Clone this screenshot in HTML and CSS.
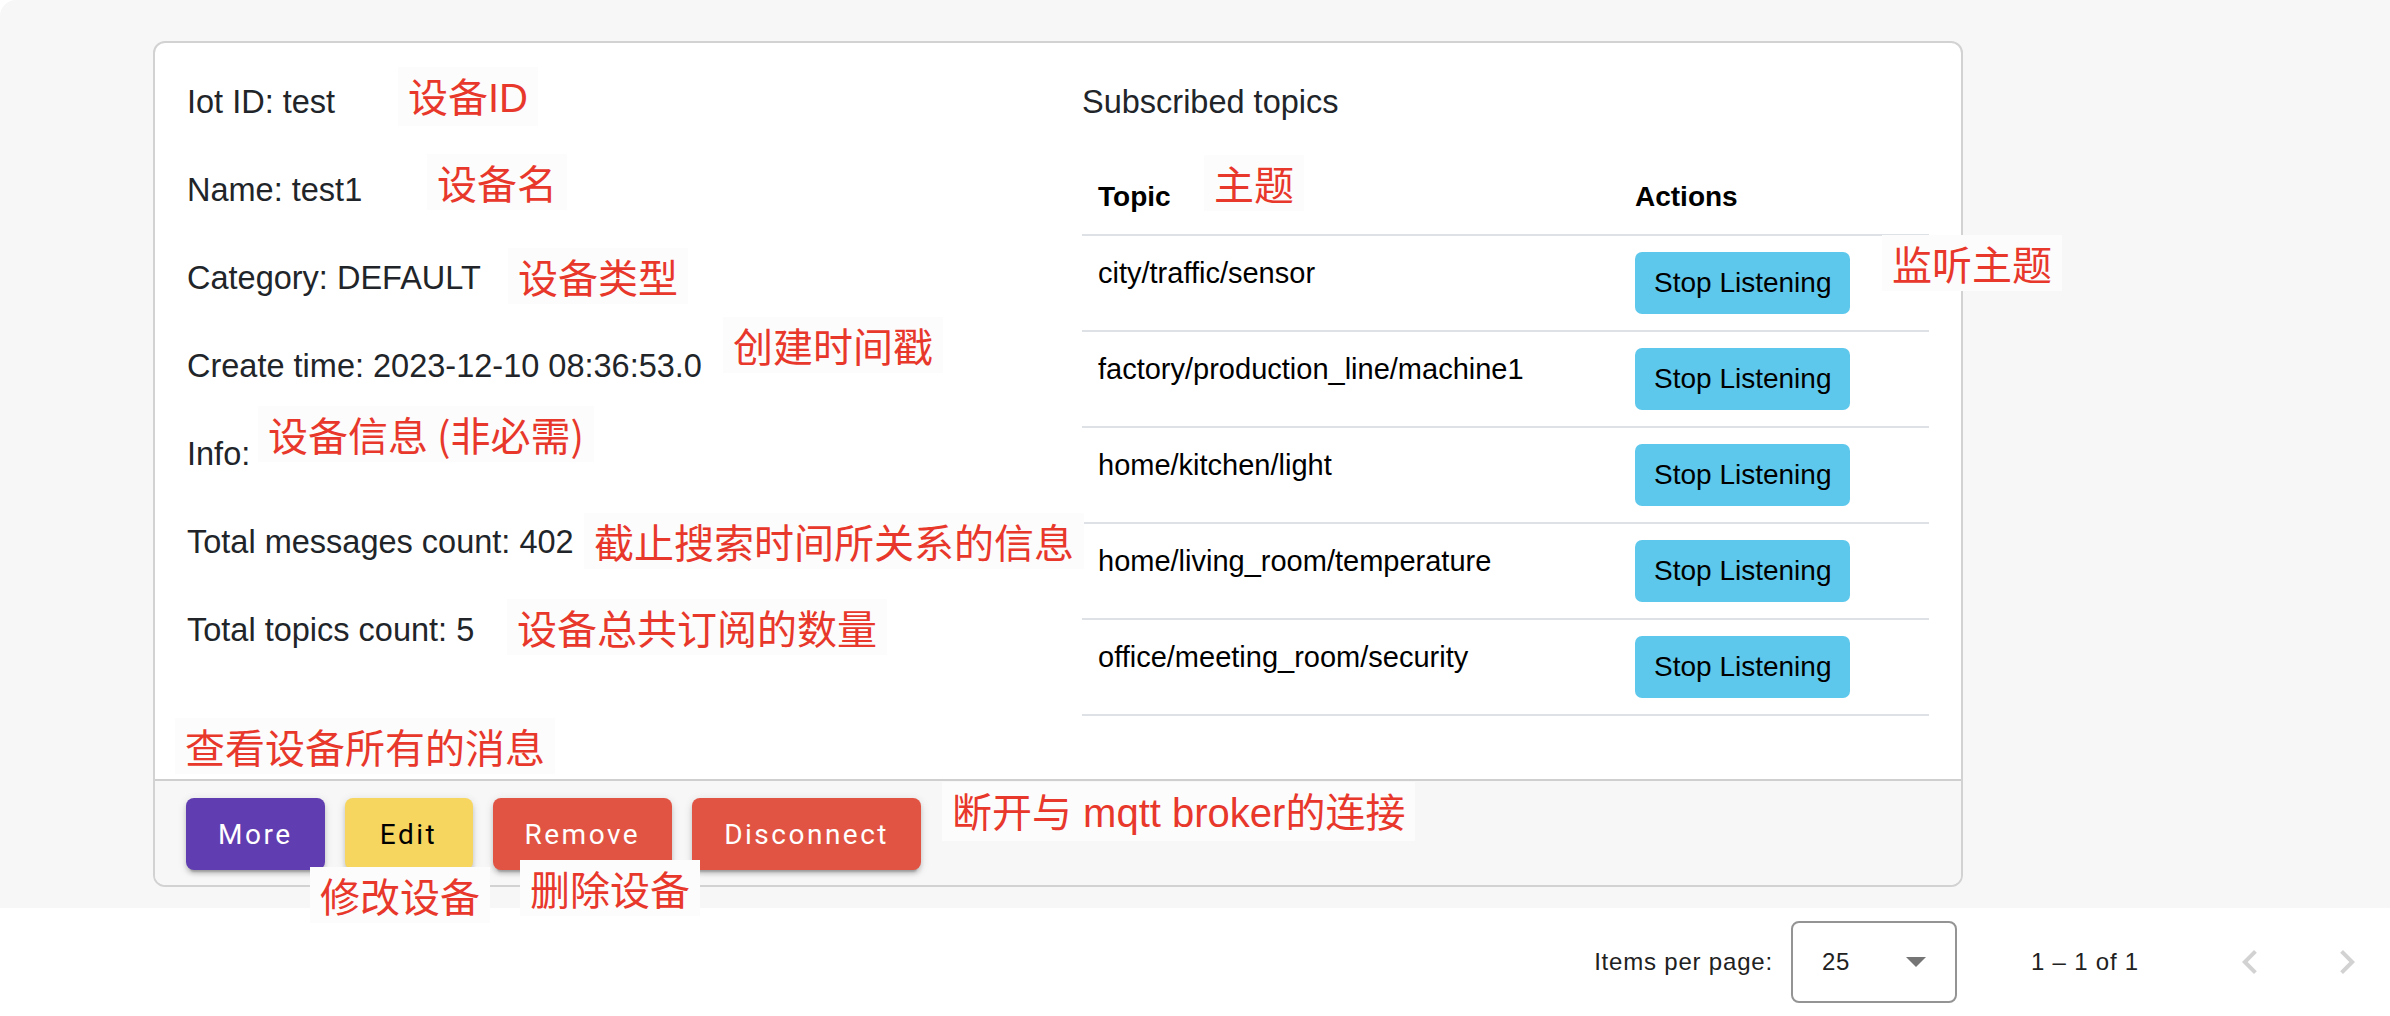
FILE: index.html
```html
<!DOCTYPE html>
<html lang="en">
<head>
<meta charset="utf-8">
<title>Device</title>
<link rel="stylesheet" href="styles.css">
</head>
<body>
<div class="shell">
  <div class="card">
    <div class="card-body">
      <div class="info-col">
        <p>Iot ID: test</p>
        <p>Name: test1</p>
        <p>Category: DEFAULT</p>
        <p>Create time: 2023-12-10 08:36:53.0</p>
        <p>Info:</p>
        <p>Total messages count: 402</p>
        <p>Total topics count: 5</p>
      </div>
      <div class="topics-col">
        <p class="topics-title">Subscribed topics</p>
        <table class="topics">
          <thead>
            <tr><th class="col-topic">Topic</th><th>Actions</th></tr>
          </thead>
          <tbody>
            <tr><td>city/traffic/sensor</td><td><button class="btn-info">Stop Listening</button></td></tr>
            <tr><td>factory/production_line/machine1</td><td><button class="btn-info">Stop Listening</button></td></tr>
            <tr><td>home/kitchen/light</td><td><button class="btn-info">Stop Listening</button></td></tr>
            <tr><td>home/living_room/temperature</td><td><button class="btn-info">Stop Listening</button></td></tr>
            <tr><td>office/meeting_room/security</td><td><button class="btn-info">Stop Listening</button></td></tr>
          </tbody>
        </table>
      </div>
    </div>
    <div class="card-footer">
      <button class="mbtn purple">More</button>
      <button class="mbtn yellow">Edit</button>
      <button class="mbtn red">Remove</button>
      <button class="mbtn red">Disconnect</button>
    </div>
  </div>
</div>
<div class="paginator">
  <span class="pg-label">Items per page:</span>
  <div class="pg-select"><span>25</span><span class="pg-arrow"></span></div>
  <span class="pg-range">1 – 1 of 1</span>
  <button class="pg-nav" aria-label="Previous page"><svg viewBox="0 0 24 24" width="48" height="48"><path d="M15.41 7.41L14 6l-6 6 6 6 1.41-1.41L10.83 12z" fill="currentColor"/></svg></button>
  <button class="pg-nav" aria-label="Next page"><svg viewBox="0 0 24 24" width="48" height="48"><path d="M8.59 16.59L10 18l6-6-6-6-1.41 1.41L13.17 12z" fill="currentColor"/></svg></button>
</div>

<span class="note a1">设备<span class="lat">ID</span></span>
<span class="note a2">设备名</span>
<span class="note a3">设备类型</span>
<span class="note a4">创建时间戳</span>
<span class="note a5">设备信息 (非必需)</span>
<span class="note a6">截止搜索时间所关系的信息</span>
<span class="note a7">设备总共订阅的数量</span>
<span class="note a8">查看设备所有的消息</span>
<span class="note a9">修改设备</span>
<span class="note a10">删除设备</span>
<span class="note a11">断开与<span class="lat"> mqtt broker</span>的连接</span>
<span class="note a12">主题</span>
<span class="note a13">监听主题</span>
</body>
</html>
```

FILE: styles.css
```css
html, body {
  margin: 0;
  padding: 0;
  background: #ffffff;
}
body {
  position: relative;
  width: 2390px;
  height: 1016px;
  overflow: hidden;
  font-family: "Liberation Sans", Arial, sans-serif;
  color: #212529;
}
.shell {
  background: #f7f7f7;
  border-top-left-radius: 16px;
  padding: 41px 0 21px 153px;
}
.card {
  width: 1810px;
  box-sizing: border-box;
  background: #ffffff;
  border: 2px solid #d2d2d2;
  border-radius: 12px;
  overflow: hidden;
}
.card-body {
  display: grid;
  grid-template-columns: 1fr 847px;
  column-gap: 48px;
  padding: 31px 32px 31px 32px;
}
.info-col p {
  margin: 0 0 32px 0;
  font-size: 32.5px;
  line-height: 56px;
}
.topics-title {
  margin: 0 0 31px 0;
  font-size: 32.5px;
  line-height: 56px;
}
.topics {
  width: 847px;
  border-collapse: collapse;
  margin-bottom: 32px;
  color: #000;
}
.topics th {
  text-align: left;
  font-weight: bold;
  font-size: 28px;
  line-height: 42px;
  padding: 15px 16px 16px 16px;
  border-bottom: 2px solid #dee2e6;
}
.topics th.col-topic {
  width: 505px;
}
.topics td {
  vertical-align: top;
  font-size: 29px;
  line-height: 42px;
  padding: 16px 16px;
  border-bottom: 2px solid #dee2e6;
}
.btn-info {
  display: block;
  height: 62px;
  box-sizing: border-box;
  padding: 0 19px;
  border: none;
  border-radius: 7px;
  background: #5dc8ec;
  color: #000;
  font-family: "Liberation Sans", Arial, sans-serif;
  font-size: 28px;
  line-height: 62px;
}
.card-footer {
  display: flex;
  gap: 20px;
  background: #f7f7f7;
  border-top: 2px solid #cfcfcf;
  padding: 17px 31px 15px 31px;
}
.mbtn {
  min-width: 128px;
  height: 72px;
  padding: 0 32px;
  border: none;
  border-radius: 8px;
  font-family: Roboto, "Liberation Sans", sans-serif;
  font-size: 28px;
  font-weight: 400;
  letter-spacing: 2.5px;
  box-shadow: 0 6px 2px -4px rgba(0,0,0,.2), 0 4px 4px 0 rgba(0,0,0,.14), 0 2px 10px 0 rgba(0,0,0,.12);
}
.purple { background: #603db0; color: #fff; }
.yellow { background: #f7d660; color: #000; }
.red { background: #e15443; color: #fff; }

.paginator {
  height: 108px;
  display: flex;
  align-items: center;
  justify-content: flex-end;
  padding-right: 15px;
  font-family: "Liberation Sans", Arial, sans-serif;
  font-size: 24px;
  letter-spacing: 0.8px;
  color: #212121;
}
.pg-label {
  margin-right: 18px;
}
.pg-select {
  width: 166px;
  height: 82px;
  box-sizing: border-box;
  border: 2px solid #949494;
  border-radius: 8px;
  display: flex;
  align-items: center;
  justify-content: space-between;
  padding: 0 29px 0 29px;
}
.pg-arrow {
  width: 0;
  height: 0;
  border-left: 10px solid transparent;
  border-right: 10px solid transparent;
  border-top: 10px solid #757575;
}
.pg-range {
  margin-left: 74px;
  margin-right: 83px;
}
.pg-nav {
  width: 56px;
  height: 80px;
  padding: 0;
  border: none;
  background: transparent;
  color: #d2d2d2;
  display: flex;
  align-items: center;
  justify-content: center;
}
.pg-nav + .pg-nav {
  margin-left: 41px;
}

.note {
  position: absolute;
  font-family: "Noto Sans CJK SC", "Noto Sans", sans-serif;
  font-size: 40px;
  line-height: 44px;
  color: #e8372b;
  background: #fcfcfc;
  padding: 6px 10px;
  white-space: nowrap;
}
.note .lat {
  font-family: "Liberation Sans", Arial, sans-serif;
}
.a1 { left: 398px; top: 67px; }
.a2 { left: 427px; top: 154px; }
.a3 { left: 508px; top: 248px; }
.a4 { left: 723px; top: 317px; }
.a5 { left: 258px; top: 406px; }
.a6 { left: 584px; top: 513px; }
.a7 { left: 507px; top: 599px; }
.a8 { left: 175px; top: 718px; }
.a9 { left: 310px; top: 867px; }
.a10 { left: 520px; top: 860px; }
.a11 { left: 942px; top: 782px; }
.a12 { left: 1204px; top: 155px; }
.a13 { left: 1882px; top: 235px; }
```
